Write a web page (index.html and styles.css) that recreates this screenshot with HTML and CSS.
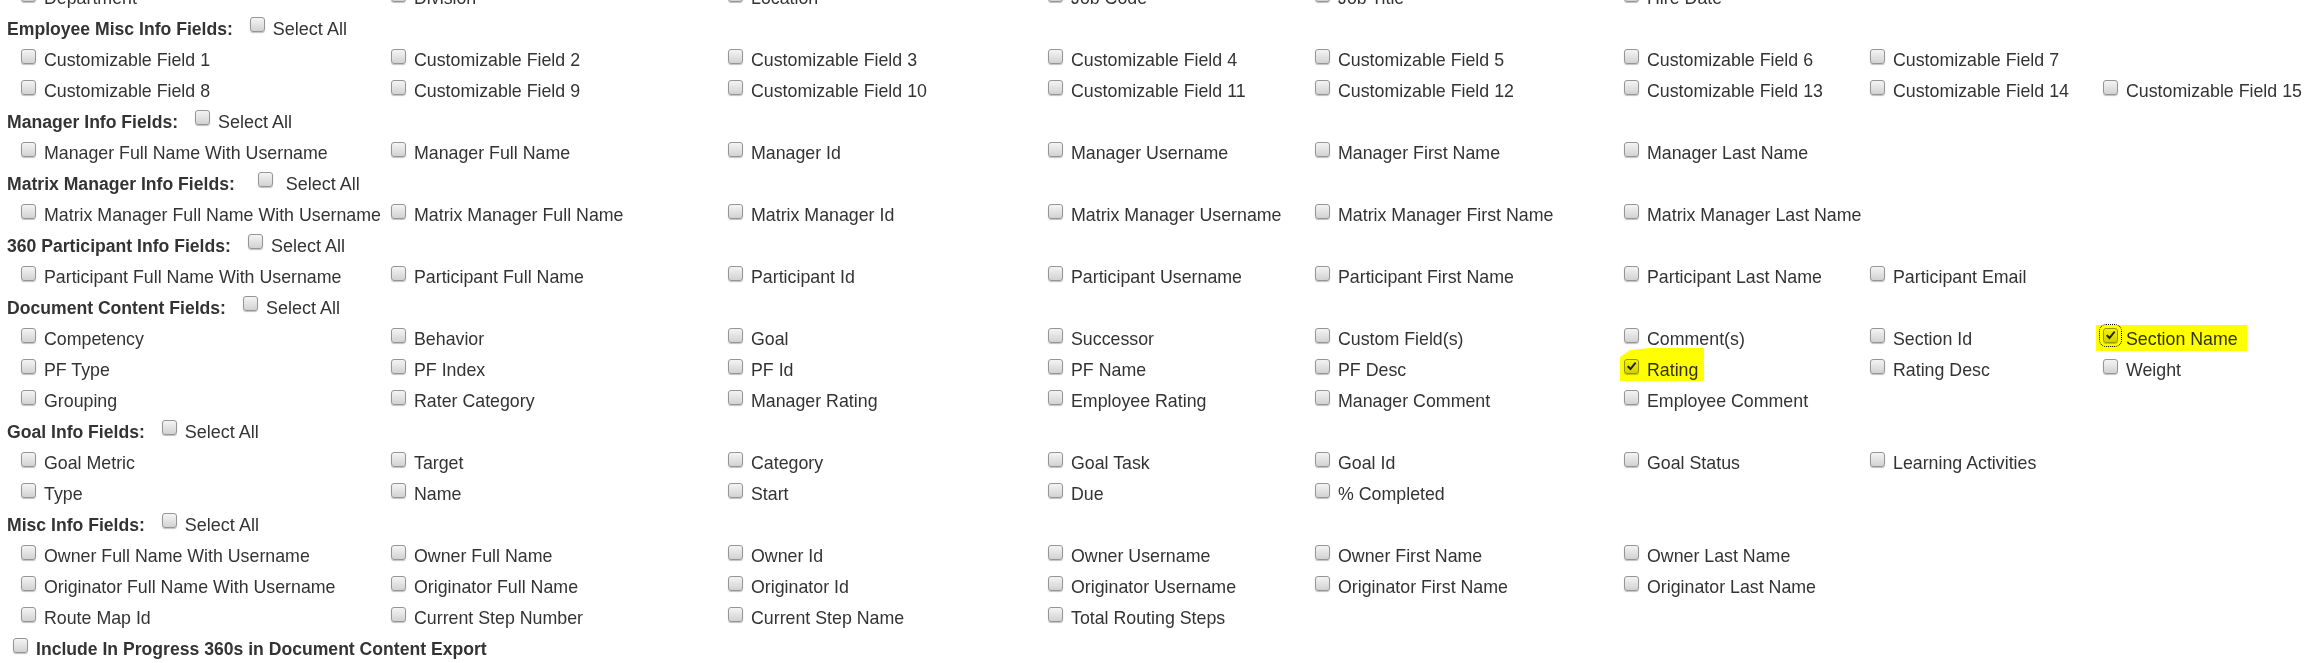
FILE: index.html
```html
<!DOCTYPE html>
<html lang="en">
<head>
<meta charset="utf-8">
<title>Export Fields</title>
<link rel="stylesheet" href="styles.css">
</head>
<body>
<main class="page">
  <div class="fields">
    <label class="opt"><input class="cb" type="checkbox"><span>Department</span></label>
    <label class="opt"><input class="cb" type="checkbox"><span>Division</span></label>
    <label class="opt"><input class="cb" type="checkbox"><span>Location</span></label>
    <label class="opt"><input class="cb" type="checkbox"><span>Job Code</span></label>
    <label class="opt"><input class="cb" type="checkbox"><span>Job Title</span></label>
    <label class="opt"><input class="cb" type="checkbox"><span>Hire Date</span></label>
  </div>

  <div class="group"><h3>Employee Misc Info Fields:</h3><label class="select"><input class="cb" type="checkbox">Select All</label></div>
  <div class="fields">
    <label class="opt"><input class="cb" type="checkbox"><span>Customizable Field 1</span></label>
    <label class="opt"><input class="cb" type="checkbox"><span>Customizable Field 2</span></label>
    <label class="opt"><input class="cb" type="checkbox"><span>Customizable Field 3</span></label>
    <label class="opt"><input class="cb" type="checkbox"><span>Customizable Field 4</span></label>
    <label class="opt"><input class="cb" type="checkbox"><span>Customizable Field 5</span></label>
    <label class="opt"><input class="cb" type="checkbox"><span>Customizable Field 6</span></label>
    <label class="opt"><input class="cb" type="checkbox"><span>Customizable Field 7</span></label>
    <span class="blank"></span>
    <label class="opt"><input class="cb" type="checkbox"><span>Customizable Field 8</span></label>
    <label class="opt"><input class="cb" type="checkbox"><span>Customizable Field 9</span></label>
    <label class="opt"><input class="cb" type="checkbox"><span>Customizable Field 10</span></label>
    <label class="opt"><input class="cb" type="checkbox"><span>Customizable Field 11</span></label>
    <label class="opt"><input class="cb" type="checkbox"><span>Customizable Field 12</span></label>
    <label class="opt"><input class="cb" type="checkbox"><span>Customizable Field 13</span></label>
    <label class="opt"><input class="cb" type="checkbox"><span>Customizable Field 14</span></label>
    <label class="opt"><input class="cb" type="checkbox"><span>Customizable Field 15</span></label>
  </div>

  <div class="group"><h3>Manager Info Fields:</h3><label class="select"><input class="cb" type="checkbox">Select All</label></div>
  <div class="fields">
    <label class="opt"><input class="cb" type="checkbox"><span>Manager Full Name With Username</span></label>
    <label class="opt"><input class="cb" type="checkbox"><span>Manager Full Name</span></label>
    <label class="opt"><input class="cb" type="checkbox"><span>Manager Id</span></label>
    <label class="opt"><input class="cb" type="checkbox"><span>Manager Username</span></label>
    <label class="opt"><input class="cb" type="checkbox"><span>Manager First Name</span></label>
    <label class="opt"><input class="cb" type="checkbox"><span>Manager Last Name</span></label>
  </div>

  <div class="group wide"><h3>Matrix Manager Info Fields:</h3><label class="select"><input class="cb" type="checkbox">Select All</label></div>
  <div class="fields">
    <label class="opt"><input class="cb" type="checkbox"><span>Matrix Manager Full Name With Username</span></label>
    <label class="opt"><input class="cb" type="checkbox"><span>Matrix Manager Full Name</span></label>
    <label class="opt"><input class="cb" type="checkbox"><span>Matrix Manager Id</span></label>
    <label class="opt"><input class="cb" type="checkbox"><span>Matrix Manager Username</span></label>
    <label class="opt"><input class="cb" type="checkbox"><span>Matrix Manager First Name</span></label>
    <label class="opt"><input class="cb" type="checkbox"><span>Matrix Manager Last Name</span></label>
  </div>

  <div class="group"><h3>360 Participant Info Fields:</h3><label class="select"><input class="cb" type="checkbox">Select All</label></div>
  <div class="fields">
    <label class="opt"><input class="cb" type="checkbox"><span>Participant Full Name With Username</span></label>
    <label class="opt"><input class="cb" type="checkbox"><span>Participant Full Name</span></label>
    <label class="opt"><input class="cb" type="checkbox"><span>Participant Id</span></label>
    <label class="opt"><input class="cb" type="checkbox"><span>Participant Username</span></label>
    <label class="opt"><input class="cb" type="checkbox"><span>Participant First Name</span></label>
    <label class="opt"><input class="cb" type="checkbox"><span>Participant Last Name</span></label>
    <label class="opt"><input class="cb" type="checkbox"><span>Participant Email</span></label>
  </div>

  <div class="group"><h3>Document Content Fields:</h3><label class="select"><input class="cb" type="checkbox">Select All</label></div>
  <div class="fields">
    <label class="opt"><input class="cb" type="checkbox"><span>Competency</span></label>
    <label class="opt"><input class="cb" type="checkbox"><span>Behavior</span></label>
    <label class="opt"><input class="cb" type="checkbox"><span>Goal</span></label>
    <label class="opt"><input class="cb" type="checkbox"><span>Successor</span></label>
    <label class="opt"><input class="cb" type="checkbox"><span>Custom Field(s)</span></label>
    <label class="opt"><input class="cb" type="checkbox"><span>Comment(s)</span></label>
    <label class="opt"><input class="cb" type="checkbox"><span>Section Id</span></label>
    <label class="opt mark mark-section"><input class="cb focus" type="checkbox" checked><span>Section Name</span></label>
    <label class="opt"><input class="cb" type="checkbox"><span>PF Type</span></label>
    <label class="opt"><input class="cb" type="checkbox"><span>PF Index</span></label>
    <label class="opt"><input class="cb" type="checkbox"><span>PF Id</span></label>
    <label class="opt"><input class="cb" type="checkbox"><span>PF Name</span></label>
    <label class="opt"><input class="cb" type="checkbox"><span>PF Desc</span></label>
    <label class="opt mark mark-rating"><input class="cb" type="checkbox" checked><span>Rating</span></label>
    <label class="opt"><input class="cb" type="checkbox"><span>Rating Desc</span></label>
    <label class="opt"><input class="cb" type="checkbox"><span>Weight</span></label>
    <label class="opt"><input class="cb" type="checkbox"><span>Grouping</span></label>
    <label class="opt"><input class="cb" type="checkbox"><span>Rater Category</span></label>
    <label class="opt"><input class="cb" type="checkbox"><span>Manager Rating</span></label>
    <label class="opt"><input class="cb" type="checkbox"><span>Employee Rating</span></label>
    <label class="opt"><input class="cb" type="checkbox"><span>Manager Comment</span></label>
    <label class="opt"><input class="cb" type="checkbox"><span>Employee Comment</span></label>
  </div>

  <div class="group"><h3>Goal Info Fields:</h3><label class="select"><input class="cb" type="checkbox">Select All</label></div>
  <div class="fields">
    <label class="opt"><input class="cb" type="checkbox"><span>Goal Metric</span></label>
    <label class="opt"><input class="cb" type="checkbox"><span>Target</span></label>
    <label class="opt"><input class="cb" type="checkbox"><span>Category</span></label>
    <label class="opt"><input class="cb" type="checkbox"><span>Goal Task</span></label>
    <label class="opt"><input class="cb" type="checkbox"><span>Goal Id</span></label>
    <label class="opt"><input class="cb" type="checkbox"><span>Goal Status</span></label>
    <label class="opt"><input class="cb" type="checkbox"><span>Learning Activities</span></label>
    <span class="blank"></span>
    <label class="opt"><input class="cb" type="checkbox"><span>Type</span></label>
    <label class="opt"><input class="cb" type="checkbox"><span>Name</span></label>
    <label class="opt"><input class="cb" type="checkbox"><span>Start</span></label>
    <label class="opt"><input class="cb" type="checkbox"><span>Due</span></label>
    <label class="opt"><input class="cb" type="checkbox"><span>% Completed</span></label>
  </div>

  <div class="group"><h3>Misc Info Fields:</h3><label class="select"><input class="cb" type="checkbox">Select All</label></div>
  <div class="fields">
    <label class="opt"><input class="cb" type="checkbox"><span>Owner Full Name With Username</span></label>
    <label class="opt"><input class="cb" type="checkbox"><span>Owner Full Name</span></label>
    <label class="opt"><input class="cb" type="checkbox"><span>Owner Id</span></label>
    <label class="opt"><input class="cb" type="checkbox"><span>Owner Username</span></label>
    <label class="opt"><input class="cb" type="checkbox"><span>Owner First Name</span></label>
    <label class="opt"><input class="cb" type="checkbox"><span>Owner Last Name</span></label>
    <span class="blank"></span><span class="blank"></span>
    <label class="opt"><input class="cb" type="checkbox"><span>Originator Full Name With Username</span></label>
    <label class="opt"><input class="cb" type="checkbox"><span>Originator Full Name</span></label>
    <label class="opt"><input class="cb" type="checkbox"><span>Originator Id</span></label>
    <label class="opt"><input class="cb" type="checkbox"><span>Originator Username</span></label>
    <label class="opt"><input class="cb" type="checkbox"><span>Originator First Name</span></label>
    <label class="opt"><input class="cb" type="checkbox"><span>Originator Last Name</span></label>
    <span class="blank"></span><span class="blank"></span>
    <label class="opt"><input class="cb" type="checkbox"><span>Route Map Id</span></label>
    <label class="opt"><input class="cb" type="checkbox"><span>Current Step Number</span></label>
    <label class="opt"><input class="cb" type="checkbox"><span>Current Step Name</span></label>
    <label class="opt"><input class="cb" type="checkbox"><span>Total Routing Steps</span></label>
  </div>

  <label class="include"><input class="cb" type="checkbox"><span>Include In Progress 360s in Document Content Export</span></label>
</main>
</body>
</html>
```

FILE: styles.css
```css
html {
  background: #ffffff;
}

body {
  margin: 0;
  font-family: "Liberation Sans", Arial, sans-serif;
  font-size: 18px;
  color: #333333;
}

.page {
  padding-left: 7px;
  margin-top: -17px;
}

.fields {
  display: grid;
  grid-template-columns: 370px 337px 320px 267px 309px 246px 233px 1fr;
  grid-auto-rows: 31px;
  margin-left: 14px;
}

.opt {
  position: relative;
  display: flex;
  align-items: flex-start;
  line-height: 31px;
  white-space: nowrap;
}

.opt span {
  font-size: 17.8px;
}

.cb {
  -webkit-appearance: none;
  appearance: none;
  flex: none;
  box-sizing: border-box;
  width: 15px;
  height: 15px;
  margin: 4px 8px 0 0;
  border: 1px solid #959595;
  border-radius: 3px;
  background: linear-gradient(#f4f4f4, #d2d2d2);
  box-shadow: 0 1px 1px rgba(0, 0, 0, 0.25);
}

.cb:checked {
  background:
    url("data:image/svg+xml,%3Csvg xmlns='http://www.w3.org/2000/svg' viewBox='0 0 12 12'%3E%3Cpath d='M1 6.4 L2.9 4.8 L4.8 7 L9.8 1.1 L11.3 2.5 L4.9 10.3 Z' fill='%23222'/%3E%3C/svg%3E") center / 11px 11px no-repeat,
    linear-gradient(#f4f4f4, #d2d2d2);
}

.focus {
  outline: 1px dotted #000000;
  outline-offset: 3px;
}

.group {
  display: flex;
  align-items: flex-start;
  height: 31px;
  line-height: 31px;
  white-space: nowrap;
}

.group h3 {
  margin: 0;
  font-size: 17.6px;
  font-weight: bold;
}

.select {
  display: flex;
  align-items: flex-start;
  margin-left: 17px;
}

.select .cb {
  margin: 3px 8px 0 0;
}

.group.wide .select {
  margin-left: 23px;
}

.group.wide .select .cb {
  margin-right: 13px;
}

.include {
  display: flex;
  align-items: flex-start;
  height: 31px;
  line-height: 31px;
  margin-left: 6px;
  font-size: 17.6px;
  font-weight: bold;
  white-space: nowrap;
}

.mark::after {
  content: "";
  position: absolute;
  background: #ffff00;
  mix-blend-mode: multiply;
  pointer-events: none;
}

.mark-rating::after {
  left: -4px;
  top: -7px;
  width: 84px;
  height: 33px;
  clip-path: polygon(0 9px, 10px 2px, 30px 0, 100% 0, 100% 100%, 0 100%);
}

.mark-section::after {
  left: -7px;
  top: 1px;
  width: 151px;
  height: 26px;
}
```
